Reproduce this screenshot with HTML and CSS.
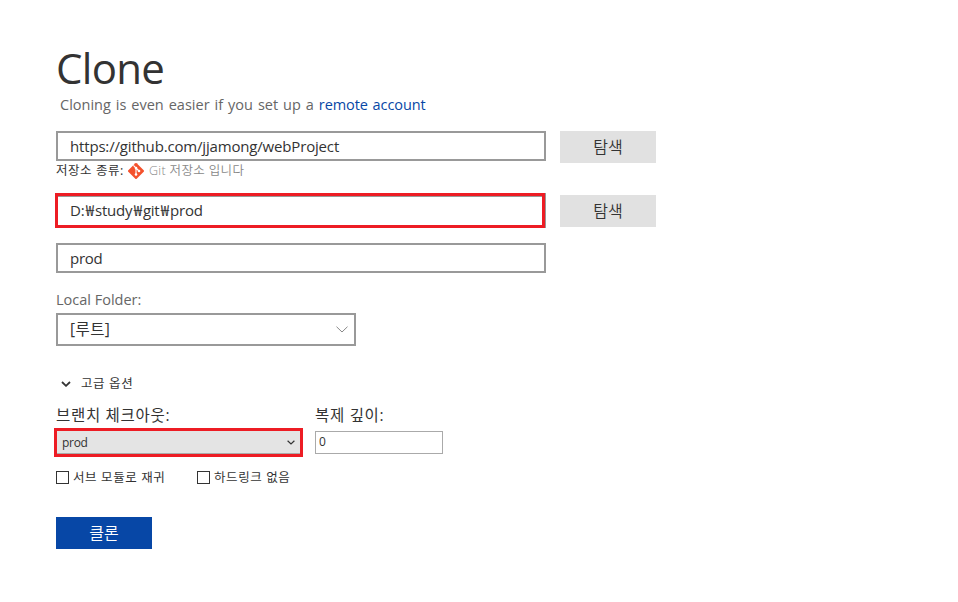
FILE: index.html
```html
<!DOCTYPE html>
<html lang="ko">
<head>
<meta charset="utf-8">
<title>Clone</title>
<link rel="stylesheet" href="styles.css">
</head>
<body>
<main class="clone">
  <h1 class="title"><span>Clone</span></h1>
  <p class="hint"><span>Cloning is even easier if you set up a </span><a class="link">remote account</a></p>

  <div class="row source">
    <div class="field"><span class="t-url">https://github.com/jjamong/webProject</span></div>
    <button class="button"><span>탐색</span></button>
  </div>
  <div class="repo-type">
    <span class="repo-label">저장소 종류:</span>
    <svg class="git" viewBox="0 0 16 16"><path fill="#f4512c" d="M8.7.3a1 1 0 0 0-1.4 0L.3 7.3a1 1 0 0 0 0 1.4l7 7a1 1 0 0 0 1.4 0l7-7a1 1 0 0 0 0-1.4z"/><path d="M5.4 2.4 8 5v6.5M8 5l3 3" fill="none" stroke="#fff" stroke-width="1.1"/><circle cx="8" cy="5.1" r="1.3" fill="#fff"/><circle cx="11" cy="8" r="1.3" fill="#fff"/><circle cx="8" cy="11.5" r="1.3" fill="#fff"/></svg>
    <span class="repo-value">Git 저장소 입니다</span>
  </div>

  <div class="row destination">
    <div class="field marked"><span class="t-path">D:<b>₩</b>study<b>₩</b>git<b>₩</b>prod</span></div>
    <button class="button"><span>탐색</span></button>
  </div>
  <div class="field name"><span class="t-name">prod</span></div>

  <div class="folder-label"><span>Local Folder:</span></div>
  <div class="field folder">
    <span class="t-root">[루트]</span>
    <svg class="chevron-large" viewBox="0 0 12 7"><path d="M.5.7 6 6 11.5.7"/></svg>
  </div>

  <div class="advanced">
    <svg class="chevron-bold" viewBox="0 0 10 6"><path d="M1 1l4 3.8L9 1"/></svg>
    <span>고급 옵션</span>
  </div>
  <div class="options">
    <div class="option branch">
      <div class="option-label"><span class="t-branch">브랜치 체크아웃:</span></div>
      <div class="combo"><span class="t-combo">prod</span><svg class="chevron-small" viewBox="0 0 8 5"><path d="M.6.8 4 4 7.4.8"/></svg></div>
    </div>
    <div class="option depth">
      <div class="option-label"><span class="t-depth">복제 깊이:</span></div>
      <div class="number"><span>0</span></div>
    </div>
  </div>
  <div class="checks">
    <div class="check"><i class="box"></i><span class="t-sub">서브 모듈로 재귀</span></div>
    <div class="check"><i class="box"></i><span class="t-hard">하드링크 없음</span></div>
  </div>
  <button class="button primary"><span>클론</span></button>
</main>
</body>
</html>
```
FILE: styles.css
```css
* { box-sizing: border-box; }
body {
  margin: 0;
  background: #fff;
  color: #333;
  font: 15px/20px "Open Sans", "Noto Sans CJK KR", sans-serif;
  white-space: nowrap;
}
.clone { width: 600px; padding-top: 43px; margin-left: 56px; }
.title { margin: 0; height: 52px; font-size: 42px; line-height: 49px; font-weight: 400; letter-spacing: -0.7px; }
.hint { margin: 0 0 0 4px; height: 36px; color: #666; white-space: pre; word-spacing: 1.2px; font-size: 14.5px; }
.link { color: #0747a6; letter-spacing: -0.1px; }
.row { display: flex; justify-content: space-between; height: 32px; }
.field {
  display: flex;
  align-items: center;
  width: 490px;
  height: 30px;
  padding-left: 12px;
  border: 2px solid #999;
  font-size: 15px;
}
.t-url { letter-spacing: -0.17px; }
.t-path, .t-name { letter-spacing: -0.25px; }
.t-path { padding-bottom: 2px; }
.t-path b {
  display: inline-block;
  width: 11px;
  margin-right: -0.3px;
  font: 400 15px/16px "Noto Sans CJK KR", sans-serif;
  text-align: center;
}
.t-root { padding-bottom: 1px; font-size: 15.5px; letter-spacing: 0.4px; }
.button {
  width: 96px;
  height: 32px;
  padding: 0 0 2px;
  border: 0;
  background: #e1e1e1;
  color: #333;
  font: 350 16px/30px "Noto Sans CJK KR", sans-serif;
}
.repo-type { display: flex; align-items: center; height: 32px; padding-bottom: 16px; font-size: 12.5px; letter-spacing: 0.55px; }
.git { width: 16px; height: 16px; margin: 0 5px 0 4px; }
.repo-type span { line-height: 16px; }
.repo-value { color: #888; font-weight: 350; letter-spacing: 0.35px; }
.marked {
  height: 35px;
  margin: -2px 0 0 -1px;
  border: 3px solid #ed1c24;
  box-shadow: inset 0 1px #999, 1px 0 #999;
}
.name { margin-top: 16px; }
.name span { padding-bottom: 1px; }
.folder-label { height: 40px; padding-top: 17px; color: #666; font-size: 14.5px; }
.folder { width: 300px; height: 33px; }
.folder svg { margin-left: auto; margin-right: 6px; }
svg path { fill: none; }
.git path:first-child { fill: #f4512c; }
.chevron-large { width: 12px; height: 7px; stroke: #888; }
.chevron-bold { width: 10px; height: 6px; margin: 0 10px 0 5px; stroke: #333; stroke-width: 1.8; }
.chevron-small { width: 8px; height: 5px; margin: 0 5px 0 auto; stroke: #333; stroke-width: 1.2; }
.advanced { display: flex; align-items: center; height: 20px; margin-top: 28px; font-size: 12.5px; letter-spacing: 0.6px; }
.options { display: flex; margin-top: 11px; }
.option-label { height: 26px; font-size: 15.5px; letter-spacing: 0.7px; }
.branch { width: 259px; }
.combo {
  display: flex;
  align-items: center;
  width: 249px;
  height: 29px;
  margin: -3px 0 0 -2px;
  padding-left: 5px;
  border: 3px solid #ed1c24;
  background: #e4e4e4;
  box-shadow: inset 0 -1px #aaa;
  font-size: 12px;
}
.t-combo { letter-spacing: -0.3px; }
.number { width: 128px; height: 23px; padding: 0 3px; border: 1px solid #aaa; font-size: 12px; line-height: 20px; }
.checks { display: flex; margin-top: 10px; height: 20px; font-size: 12.5px; letter-spacing: 0.6px; }
.check { display: flex; align-items: center; width: 141px; }
.check span { padding-top: 2px; }
.box { width: 13px; height: 13px; margin-right: 4px; border: 1px solid #333; }
.primary { display: block; margin-top: 30px; background: #0747a6; color: #fff; }
```
